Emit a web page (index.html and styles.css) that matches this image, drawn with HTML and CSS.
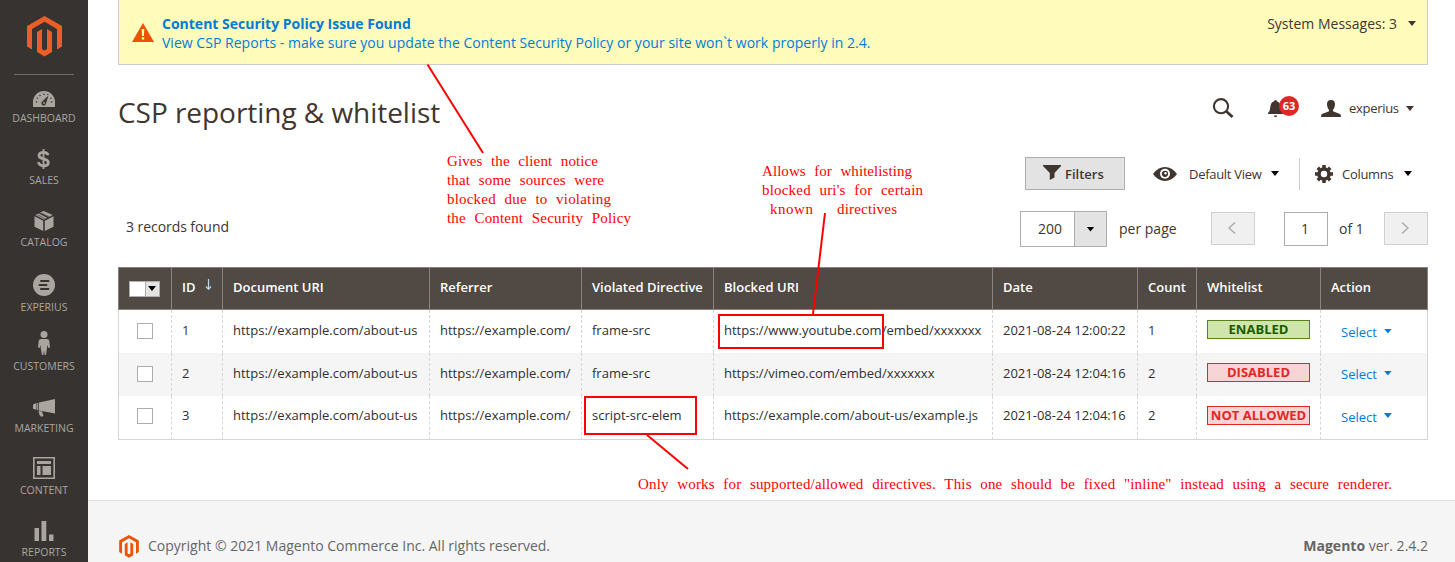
FILE: index.html
```html
<!DOCTYPE html>
<html lang="en">
<head>
<meta charset="utf-8">
<title>CSP reporting &amp; whitelist</title>
<link rel="stylesheet" href="styles.css">
</head>
<body>
<div class="page">
  <nav class="sidebar">
    <div class="brand">
      <svg width="35" height="41" viewBox="0 0 35 41" fill="#eb5e28"><path d="M17.500 0L35 10V30.500L30 33.500V13L17.500 5.800L5 13V33.500L0 30.500V10Z"/><path d="M10 16L15 13V33L17.500 34.500L20 33V13L25 16V36L17.500 40.500L10 36Z"/></svg>
    </div>
    <a class="item first"><svg width="22" height="16" viewBox="0 0 22 16"><path d="M0 16V11a11 11 0 0 1 22 0v5z"/><g fill="#373330"><path d="M15.500 4.500L13 12.300a2.300 2.300 0 1 1-3.500-2z"/><circle cx="3.400" cy="11" r=".8"/><circle cx="4.300" cy="7.300" r=".8"/><circle cx="7" cy="4.500" r=".8"/><circle cx="11" cy="3.300" r=".8"/><circle cx="14.800" cy="3.600" r=".7"/><circle cx="17.900" cy="7.300" r=".8"/><circle cx="18.700" cy="11" r=".8"/></g><circle cx="11" cy="12" r=".9"/></svg><span>DASHBOARD</span></a>
    <a class="item"><svg class="dollar" width="13" height="20" viewBox="0 0 13 20" fill="none"><path d="M11 6.200C10.700 4.300 9 3.300 6.500 3.300 3.700 3.300 2 4.500 2 6.400 2 8.600 4 9.200 6.500 9.800 9.200 10.400 11.300 11.200 11.300 13.500 11.300 15.600 9.500 16.800 6.700 16.800 3.700 16.800 1.800 15.600 1.500 13.200" stroke="#aaa69f" stroke-width="2.800"/><path d="M6.500 0V20" stroke="#aaa69f" stroke-width="1.800"/></svg><span>SALES</span></a>
    <a class="item"><svg width="20" height="20" viewBox="0 0 20 20"><path d="M.5 5.300L9.200 9.700V20L.5 15.800zM19.500 5.300L10.800 9.700V20L19.500 15.800z"/><path d="M1.300 4L4.700 2.400 13 6.700 10 8.400zM6 1.800L9.500 0 18.800 4 14.800 5.900z"/><path d="M7.500 2L15 5.600M3.300 3.800L11 7.500" stroke="#373330" stroke-width=".6"/></svg><span>CATALOG</span></a>
    <a class="item tall"><svg width="22" height="22" viewBox="0 0 22 22"><circle cx="11" cy="11" r="11"/><path d="M8 7h7.500M6.500 11h7M8 15h7.500" stroke="#373330" stroke-width="2" stroke-linecap="round"/></svg><span>EXPERIUS</span></a>
    <a class="item short"><svg width="12" height="24" viewBox="0 0 12 24"><circle cx="6" cy="3.500" r="3.500"/><path d="M3 8h6q2 0 2.300 2l.7 6.500-1.500.5-1.500-3V17L8 24H6.700L6 19.500 5.300 24H4L2.700 17V14L1.500 17 0 16.500.7 10Q1 8 3 8z"/></svg><span>CUSTOMERS</span></a>
    <a class="item"><svg width="22" height="18" viewBox="0 0 22 18"><path d="M22 0V14.500L6 11.500V3.500zM0 5.500L3.500 4V10.800L0 9.800zM4.200 3.900H5.300V11.300H4.200zM5.500 12L9 12.500 10.500 17 8.300 17.800 6.500 16z"/></svg><span>MARKETING</span></a>
    <a class="item"><svg width="22" height="22" viewBox="0 0 22 22"><path fill-rule="evenodd" d="M0 0H22V22H0zM1.600 1.600V20.400H20.400V1.600z"/><path d="M4 4H18V7H4zM4 9H7.500V18H4zM9.500 9H18V18H9.500z"/></svg><span>CONTENT</span></a>
    <a class="item"><svg width="20" height="20" viewBox="0 0 20 20"><path d="M.5 7H5V20H.5zM7.500 0H12.300V20H7.500zM15 13.500H19.500V20H15z"/></svg><span>REPORTS</span></a>
  </nav>

  <main class="main">
    <section class="notice">
      <svg width="22" height="19" viewBox="0 0 22 19"><path d="M11 0L22 19H0z" fill="#eb5202"/><path d="M9.700 6H12.300L11.900 13H10.100zM9.800 14.200h2.400v2.300H9.800z" fill="#fffbbb"/></svg>
      <div class="notice-text"><strong>Content Security Policy Issue Found</strong><a>View CSP Reports - make sure you update the Content Security Policy or your site won`t work properly in 2.4.</a></div>
      <div class="messages">System Messages: 3 <i class="caret"></i></div>
    </section>

    <header class="header">
      <h1>CSP reporting &amp; whitelist</h1>
      <svg class="search" width="22" height="20" viewBox="0 0 22 20" fill="none" stroke="#41362f"><circle cx="9" cy="8.200" r="7.100" stroke-width="2.100"/><path d="M14 13L20.500 19" stroke-width="2.800"/></svg>
      <div class="bell"><svg width="15" height="18" viewBox="0 0 15 18" fill="#41362f"><path d="M7.500 0q1.200 0 1.300 1.200C12 2 12.500 5 12.800 8q.3 3.500 2.200 5v1H0v-1q1.900-1.500 2.200-5C2.500 5 3 2 6.200 1.200 6.300 0 7.500 0 7.500 0zM5.800 15.500h3.400q-.3 1.700-1.700 1.700t-1.700-1.700z"/></svg><b>63</b></div>
      <svg class="avatar" width="20" height="17" viewBox="0 0 20 17" fill="#41362f"><path d="M10 0C13 0 14.200 2 14 4.500 13.800 7 13 8.800 12 9.800V11.300L19 14Q20 14.500 20 17H0Q0 14.500 1 14L8 11.300V9.800C7 8.800 6.200 7 6 4.500 5.800 2 7 0 10 0z"/></svg>
      <span class="user">experius</span><i class="caret"></i>
    </header>

    <div class="tools">
      <button class="filters"><svg width="18" height="15" viewBox="0 0 18 15" fill="#41362f"><path d="M0 0H18V1L11.500 8V12.500L6.800 15V8L0 1z"/></svg><span>Filters</span></button>
      <div class="view"><svg width="24" height="14" viewBox="0 0 24 14"><path d="M0 7Q5 0 12 0T24 7Q19 14 12 14T0 7z" fill="#41362f"/><circle cx="12" cy="6.800" r="5" fill="#fff"/><circle cx="12" cy="6.800" r="3.100" fill="#41362f"/><circle cx="12.500" cy="6.300" r="1.200" fill="#fff"/></svg><span>Default View</span><i class="caret dark"></i></div>
      <div class="columns"><svg width="18" height="18" viewBox="-9 -9 18 18" fill="none" stroke="#41362f"><circle r="5" stroke-width="3.600"/><path d="M0-9V-6M0 9V6M-9 0H-6M9 0H6M-6.200-6.200L-4.300-4.300M6.200 6.200L4.300 4.300M-6.200 6.200L-4.300 4.300M6.200-6.200L4.300-4.300" stroke-width="3.600"/></svg><span>Columns</span><i class="caret dark"></i></div>
    </div>

    <div class="paging">
      <span class="found">3 records found</span>
      <div class="size"><span>200</span><div class="drop"><i class="caret dark"></i></div></div>
      <span class="per">per page</span>
      <button class="step"><svg width="8" height="12" viewBox="0 0 8 12"><path d="M7 .5L1 6L7 11.500"/></svg></button>
      <span class="number">1</span><span class="of">of 1</span>
      <button class="step"><svg width="8" height="12" viewBox="0 0 8 12"><path d="M1 .5L7 6L1 11.500"/></svg></button>
    </div>

    <table class="grid">
      <colgroup><col class="c-check"><col class="c-id"><col class="c-doc"><col class="c-ref"><col class="c-dir"><col class="c-uri"><col class="c-date"><col class="c-count"><col class="c-white"><col class="c-act"></colgroup>
      <thead><tr><th><div class="multi"><i class="caret dark"></i></div></th><th><div class="sort">ID<svg width="7" height="12" viewBox="0 0 7 12"><path d="M3.500 1V11M1 8.500L3.500 11.300L6 8.500" fill="none" stroke="#b9d9ee" stroke-width="1.200"/></svg></div></th><th>Document URI</th><th>Referrer</th><th>Violated Directive</th><th>Blocked URI</th><th>Date</th><th>Count</th><th>Whitelist</th><th>Action</th></tr></thead>
      <tbody>
        <tr><td><i class="check"></i></td><td>1</td><td>https://example.com/about-us</td><td>https://example.com/</td><td>frame-src</td><td>https://www.youtube.com/embed/xxxxxxx</td><td>2021-08-24 12:00:22</td><td>1</td><td><span class="tag on">ENABLED</span></td><td><a class="select">Select<i class="caret"></i></a></td></tr>
        <tr><td><i class="check"></i></td><td>2</td><td>https://example.com/about-us</td><td>https://example.com/</td><td>frame-src</td><td>https://vimeo.com/embed/xxxxxxx</td><td>2021-08-24 12:04:16</td><td>2</td><td><span class="tag">DISABLED</span></td><td><a class="select">Select<i class="caret"></i></a></td></tr>
        <tr><td><i class="check"></i></td><td>3</td><td>https://example.com/about-us</td><td>https://example.com/</td><td>script-src-elem</td><td>https://example.com/about-us/example.js</td><td>2021-08-24 12:04:16</td><td>2</td><td><span class="tag">NOT ALLOWED</span></td><td><a class="select">Select<i class="caret"></i></a></td></tr>
      </tbody>
    </table>

    <footer class="footer">
      <svg width="20" height="23" viewBox="0 0 35 41" fill="#eb5202"><path d="M17.500 0L35 10V30.500L30 33.500V13L17.500 5.800L5 13V33.500L0 30.500V10Z"/><path d="M10 16L15 13V33L17.500 34.500L20 33V13L25 16V36L17.500 40.500L10 36Z"/></svg>
      <span class="copyright">Copyright © 2021 Magento Commerce Inc. All rights reserved.</span>
      <span class="version"><b>Magento</b> ver. 2.4.2</span>
    </footer>
  </main>
</div>

<svg class="notes" width="1455" height="562" viewBox="0 0 1455 562">
  <g fill="none" stroke="#f00" stroke-width="2">
    <path d="M427.500 64.500L483 153M825 213L813 314M647 435L688 469"/>
    <rect x="719" y="315" width="164" height="33"/>
    <rect x="585" y="397" width="111" height="37"/>
  </g>
  <g class="note">
    <text x="447" y="166" textLength="151">Gives the client notice</text>
    <text x="447" y="185" textLength="157">that some sources were</text>
    <text x="447" y="204" textLength="164">blocked due to violating</text>
    <text x="447" y="223" textLength="184">the Content Security Policy</text>
    <text x="762" y="176" textLength="150">Allows for whitelisting</text>
    <text x="762" y="195" textLength="161">blocked uri's for certain</text>
    <text x="770" y="214" textLength="43">known</text>
    <text x="837" y="214" textLength="60">directives</text>
    <text x="638" y="489" textLength="754">Only works for supported/allowed directives. This one should be fixed "inline" instead using a secure renderer.</text>
  </g>
</svg>
</body>
</html>
```
FILE: styles.css
```css
* { box-sizing: border-box; }
body { margin: 0; background: #fff; color: #41362f; font: 14px/19px "Open Sans", "Noto Sans", sans-serif; }
svg { display: block; flex: none; }
button { font: inherit; color: inherit; padding: 0; margin: 0; border-radius: 0; }
.page { display: flex; width: 1455px; height: 562px; overflow: hidden; }

.sidebar { flex: none; width: 88px; background: #373330; fill: #aaa69f; }
.brand { height: 75px; margin: 0 14px; padding: 16px 0 0 13px; border-bottom: 1px solid #736963; }
.item { display: flex; flex-direction: column; align-items: center; justify-content: flex-end; height: 62px; }
.item.first { height: 50px; }
.item.tall { height: 65px; }
.item.short { height: 59px; }
.item span { margin-top: 4px; color: #aaa6a0; font-size: 10.500px; line-height: 14px; }
.dollar { margin-right: 1px; }

.main { flex: 1; display: flex; flex-direction: column; min-width: 0; }
.main > * { flex: none; }
.caret { display: block; flex: none; width: 8px; height: 5px; background: currentColor; clip-path: polygon(0 0, 100% 0, 50% 100%); }
.caret.dark { color: #000; }

.notice { display: flex; height: 65px; margin: 0 27px 0 30px; padding: 14px 11px 0 13px; background: #fffbbb; border: 1px solid #ccc; border-top: 0; }
.notice > svg { margin-top: 9px; }
.notice-text { flex: 1; padding-left: 8px; color: #007bdb; display: flex; flex-direction: column; }
.notice-text a { letter-spacing: .028px; }
.messages { display: flex; align-items: center; gap: 11px; height: 19px; }

.header { display: flex; align-items: center; height: 87px; padding: 0 41px 0 30px; font-size: 13px; }
h1 { flex: 1; margin: 6px 0 0; font-size: 28px; font-weight: 400; line-height: 38px; letter-spacing: -.04px; }
.search { margin-bottom: 2px; }
.bell { display: flex; width: 31px; margin: 0 22px 0 34px; padding-top: 1px; }
.bell b { flex: none; width: 20px; height: 20px; margin: -4px 0 0 -4px; border-radius: 10px; background: #e22626; color: #fff; font-size: 11px; line-height: 20px; text-align: center; }
.avatar { margin-bottom: 1px; }
.user { width: 50px; margin: 0 7px 0 8px; letter-spacing: -.3px; }

.tools { display: flex; align-items: center; height: 43px; padding: 0 43px 0 0; justify-content: flex-end; font-size: 13px; }
.filters { display: flex; align-items: center; gap: 4px; width: 100px; height: 33px; padding-left: 17px; background: #e3e3e3; border: 1px solid #adadad; font-weight: 600; }
.filters svg { margin-bottom: 2px; }
.filters span, .view span, .columns span { padding-top: 2px; }
.view { display: flex; align-items: center; height: 32px; margin-left: 28px; padding-right: 20px; border-right: 1px solid #ccc; }
.view span { width: 73px; margin: 0 9px 0 12px; letter-spacing: -.3px; white-space: nowrap; }
.columns { display: flex; align-items: center; margin-left: 15px; }
.columns span { width: 52px; margin: 0 10px 0 9px; letter-spacing: -.3px; }

.paging { display: flex; align-items: center; height: 72px; padding: 0 27px 0 38px; }
.found { flex: 1; padding-bottom: 10px; letter-spacing: -.06px; }
.size { display: flex; width: 87px; height: 36px; margin-bottom: 4px; border: 1px solid #adadad; line-height: 34px; }
.size span { flex: 1; padding-left: 17px; }
.drop { display: flex; align-items: center; justify-content: center; width: 32px; background: #e3e3e3; border-left: 1px solid #adadad; }
.per { width: 92px; margin: 0 0 6px 12px; }
.step { display: flex; align-items: center; justify-content: center; width: 44px; height: 33px; margin-bottom: 5px; background: #f0f0f0; border: 1px solid #d0d0d0; }
.step svg { margin: 0 3px 2px 0; }
.step path { fill: none; stroke: #aaa; stroke-width: 1.400; }
.number { width: 44px; height: 34px; margin: 0 11px 4px 29px; padding-right: 2px; border: 1px solid #adadad; line-height: 32px; text-align: center; }
.of { width: 33px; margin: 0 12px 6px 0; white-space: nowrap; }

.grid { width: 1310px; margin-left: 30px; table-layout: fixed; border-collapse: separate; border-spacing: 0; font-size: 13px; line-height: 18px; }
.c-check { width: 53px; } .c-id { width: 51px; } .c-doc { width: 207px; } .c-ref { width: 152px; } .c-dir { width: 132px; }
.c-uri { width: 279px; } .c-date { width: 145px; } .c-count { width: 59px; } .c-white { width: 124px; } .c-act { width: 108px; }
th { height: 43px; padding: 0 0 4px 10px; background: #514943; border: 1px solid #8a837f; border-right: 0; color: #fff; font-weight: 600; text-align: left; white-space: nowrap; }
th:first-child { padding-bottom: 3px; }
td { height: 43px; padding: 0 0 3px 10px; border-left: 1px dashed #d6d6d6; color: #303030; white-space: nowrap; }
th:last-child { border-right: 1px solid #8a837f; }
td:first-child { border-left: 1px solid #d6d6d6; padding-left: 18px; }
td:last-child { border-right: 1px solid #d6d6d6; padding: 1px 0 0 20px; }
td:nth-child(9) { padding-bottom: 5px; }
tbody tr:nth-child(even) td { background: #f5f5f5; }
tbody tr:nth-child(even) td:last-child { padding: 0 0 1px 20px; }
tbody tr:last-child td { height: 44px; padding-bottom: 5px; border-bottom: 1px solid #d6d6d6; }
tbody tr:last-child td:last-child { padding-bottom: 3px; }
.multi { display: flex; align-items: center; justify-content: center; width: 31px; height: 16px; margin-top: 3px; padding-left: 15px; border: 1px solid #adadad; background: linear-gradient(90deg, #fff 15px, #adadad 15px 16px, #e3e3e3 16px); }
.sort { display: flex; gap: 9px; }
.check { display: block; width: 16px; height: 16px; margin-top: 2px; background: #fff; border: 1px solid #adadad; }
.tag { display: block; width: 103px; height: 19px; background: #f9d4d4; border: 1px solid #e22626; color: #e22626; font-weight: 700; line-height: 17px; text-align: center; }
.tag.on { background: #d0e5a9; border-color: #5b8116; color: #185b00; }
.select { display: flex; align-items: center; gap: 7px; color: #007bdb; }
.select .caret { margin-bottom: 2px; }

.footer { display: flex; align-items: center; gap: 9px; height: 92px; margin-top: 60px; padding: 0 27px 0 31px; background: #f5f5f5; border-top: 1px solid #ddd; color: #666; }
.copyright, .version { padding-bottom: 2px; }
.version { margin-left: auto; }
.version b { font-weight: 700; }

.notes { position: absolute; left: 0; top: 0; }
.note { fill: #f00; font: 15px "Liberation Serif", serif; word-spacing: 4.700px; }
```
